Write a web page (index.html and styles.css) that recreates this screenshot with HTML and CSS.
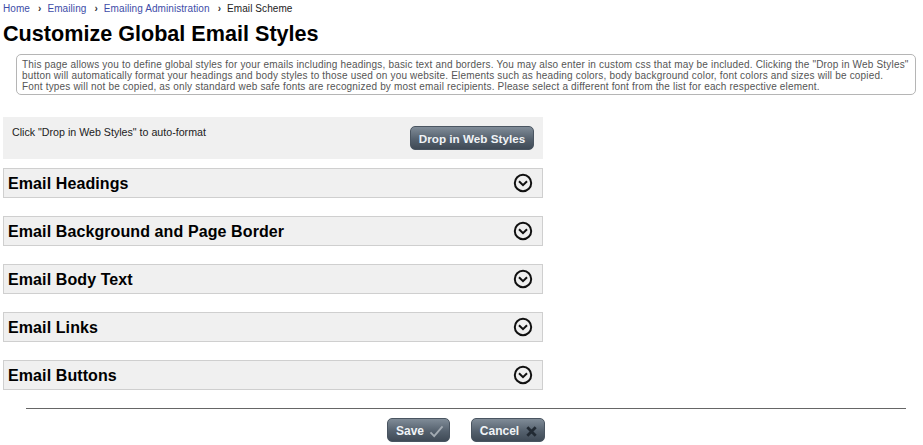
FILE: index.html
```html
<!DOCTYPE html>
<html lang="en">
<head>
    <meta charset="UTF-8">
    <title>Customize Global Email Styles</title>
    <link rel="stylesheet" href="styles.css">
</head>
<body>

<div class="crumbs">
    <a href="#">Home</a><span class="sep">&rsaquo;</span>
    <a href="#">Emailing</a><span class="sep">&rsaquo;</span>
    <a href="#">Emailing Administration</a><span class="sep">&rsaquo;</span>
    <span>Email Scheme</span>
</div>

<h1>Customize Global Email Styles</h1>

<div class="intro">
    This page allows you to define global styles for your emails including headings, basic text and borders. You may also enter in custom css that may be included. Clicking the "Drop in Web Styles"<br>
    button will automatically format your headings and body styles to those used on you website. Elements such as heading colors, body background color, font colors and sizes will be copied.<br>
    Font types will not be copied, as only standard web safe fonts are recognized by most email recipients. Please select a different font from the list for each respective element.
</div>

<div class="panel">
    <div class="drop-row">
        <span>Click "Drop in Web Styles" to auto-format</span>
        <button class="btn btn-drop">Drop in Web Styles</button>
    </div>

    <div class="section-bar">
        <h2>Email Headings</h2>
        <svg class="chevron" viewBox="0 0 20 20"><circle cx="10" cy="10" r="8.2"/><path d="M6 8.2l4 4 4-4"/></svg>
    </div>
    <div class="section-bar">
        <h2>Email Background and Page Border</h2>
        <svg class="chevron" viewBox="0 0 20 20"><circle cx="10" cy="10" r="8.2"/><path d="M6 8.2l4 4 4-4"/></svg>
    </div>
    <div class="section-bar">
        <h2>Email Body Text</h2>
        <svg class="chevron" viewBox="0 0 20 20"><circle cx="10" cy="10" r="8.2"/><path d="M6 8.2l4 4 4-4"/></svg>
    </div>
    <div class="section-bar">
        <h2>Email Links</h2>
        <svg class="chevron" viewBox="0 0 20 20"><circle cx="10" cy="10" r="8.2"/><path d="M6 8.2l4 4 4-4"/></svg>
    </div>
    <div class="section-bar">
        <h2>Email Buttons</h2>
        <svg class="chevron" viewBox="0 0 20 20"><circle cx="10" cy="10" r="8.2"/><path d="M6 8.2l4 4 4-4"/></svg>
    </div>
</div>

<div class="actions">
    <button class="btn btn-save">Save
        <svg viewBox="0 0 16 14"><path class="check" d="M1.5 8l4 4L14.500 1.500"/></svg>
    </button>
    <button class="btn btn-cancel">Cancel
        <svg viewBox="0 0 14 14"><path class="cross" d="M2.500 2.500l9 9M11.500 2.500l-9 9"/></svg>
    </button>
</div>

</body>
</html>
```

FILE: styles.css
```css
html, body {
    height: 445px;
    overflow: hidden;
}
body {
    font-family: "Liberation Sans", Arial, sans-serif;
    background-color: white;
    color: #222;
    margin: 0;
    padding: 0 3px;
}
.crumbs {
    font-size: 10px;
    line-height: 14px;
    padding-top: 2px;
    display: flex;
    white-space: pre;
    letter-spacing: 0.08px;
    color: #222;
}
.crumbs a {
    color: #3d4ca8;
    text-decoration: none;
}
.crumbs .sep {
    margin: 0 6px 0 8px;
    color: #333;
    font-weight: bold;
}
h1 {
    font-size: 21.6px;
    line-height: 26px;
    margin: 5px 0 0;
    color: black;
}
.intro {
    margin: 7px 4px 0 13px;
    border: 1px solid #b5b5b5;
    border-radius: 5px;
    padding: 4px 0 2px 5px;
    font-size: 10px;
    line-height: 11px;
    letter-spacing: 0.18px;
    color: #555;
    white-space: nowrap;
}
.panel {
    width: 540px;
    margin-top: 22px;
}
.drop-row {
    background: #f0f0f0;
    height: 42px;
    padding: 8px 9px 0 9px;
    box-sizing: border-box;
    display: flex;
    justify-content: space-between;
    font-size: 10.67px;
    line-height: 14px;
    color: #222;
}
.btn {
    font-family: "Liberation Sans", Arial, sans-serif;
    font-weight: bold;
    font-size: 12px;
    color: #f0f3f6;
    border: 1px solid #4a5561;
    border-radius: 5px;
    background: linear-gradient(#808c98, #55616e 55%, #3f4a56);
    display: flex;
    align-items: center;
    justify-content: center;
    padding: 0;
}
.btn-drop {
    width: 124px;
    height: 24px;
    margin-top: 1px;
    font-size: 11.7px;
}
.section-bar {
    height: 30px;
    box-sizing: border-box;
    background: #f0f0f0;
    border: 1px solid #cfcfcf;
    margin-top: 18px;
    display: flex;
    align-items: center;
    justify-content: space-between;
    padding: 0 9px 0 4px;
}
.drop-row + .section-bar {
    margin-top: 9px;
}
.section-bar h2 {
    font-size: 16px;
    line-height: 18px;
    letter-spacing: 0.1px;
    margin: 0;
    padding-top: 2px;
    color: black;
}
.chevron {
    width: 20px;
    height: 20px;
    fill: none;
    stroke: #111;
    stroke-width: 2;
}
.actions {
    border-top: 1px solid #666;
    margin: 18px 14px 0 23px;
    padding-top: 9px;
    padding-right: 1px;
    display: flex;
    justify-content: center;
    gap: 21px;
}
.btn-save, .btn-cancel {
    height: 24px;
    gap: 5px;
    padding: 2px 0 0 4px;
}
.btn-save { width: 63px; }
.btn-cancel { width: 74px; }
.btn svg {
    width: 15px;
    height: 13px;
    fill: none;
}
.check {
    stroke: #a3abb3;
    stroke-width: 2;
}
.cross {
    stroke: #222a33;
    stroke-width: 3;
}
```
